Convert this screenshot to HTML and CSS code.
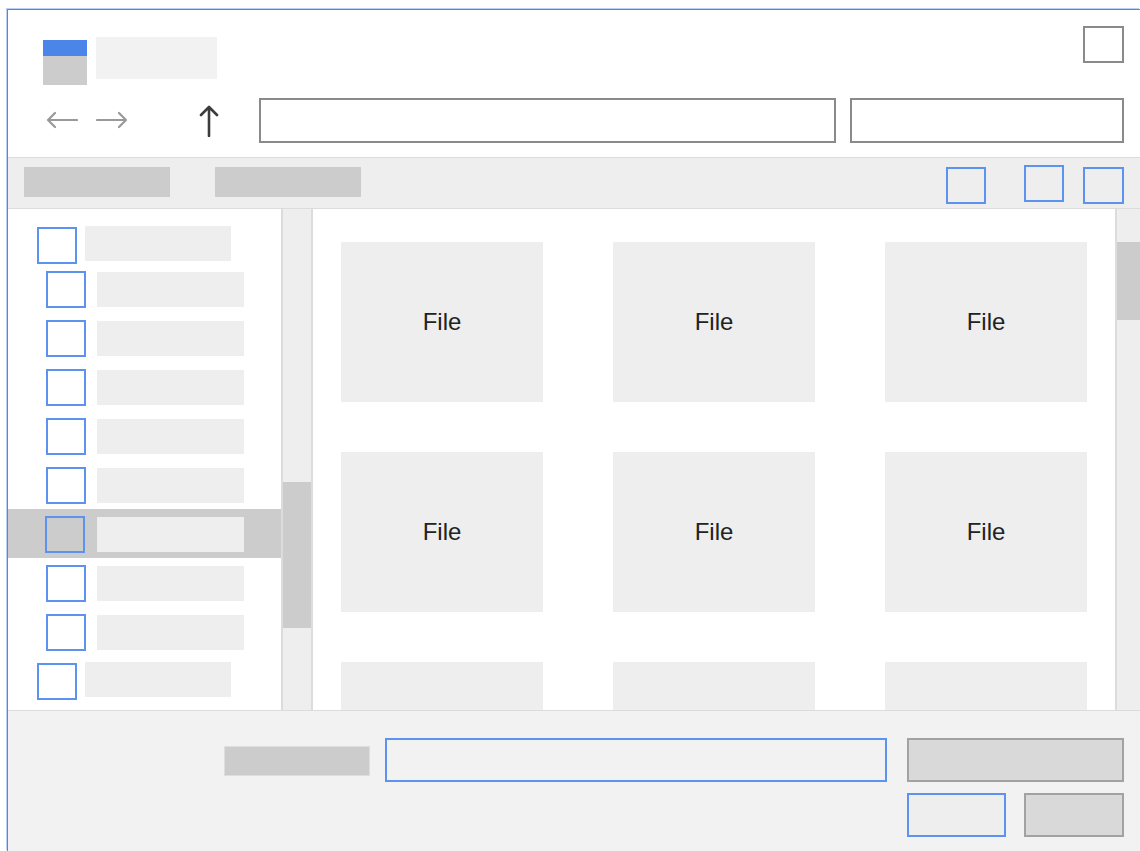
FILE: index.html
```html
<!DOCTYPE html>
<html lang="en">
<head>
<meta charset="utf-8">
<title>Open file</title>
<link rel="stylesheet" href="styles.css">
</head>
<body>
<div class="window">
  <header class="header">
    <div class="titlebar">
      <div class="app-icon"><span class="app-icon__bar"></span><span class="app-icon__body"></span></div>
      <div class="title-placeholder"></div>
      <div class="close-box"></div>
    </div>
    <div class="navbar">
      <svg class="nav-arrow" width="32" height="18" viewBox="0 0 32 18" fill="none" stroke="currentColor" stroke-width="2.2" stroke-linecap="round" stroke-linejoin="round"><path d="M31 9H2M9 2L2 9l7 7"/></svg>
      <svg class="nav-arrow nav-arrow--fwd" width="32" height="18" viewBox="0 0 32 18" fill="none" stroke="currentColor" stroke-width="2.2" stroke-linecap="round" stroke-linejoin="round"><path d="M1 9h29M23 2l7 7-7 7"/></svg>
      <svg class="nav-up" width="20" height="32" viewBox="0 0 20 32" fill="none" stroke="currentColor" stroke-width="2.6" stroke-linecap="round" stroke-linejoin="round"><path d="M10 31V2M2 10l8-8 8 8"/></svg>
      <div class="address-box"></div>
      <div class="search-box"></div>
    </div>
  </header>

  <div class="toolbar">
    <div class="tool-btn"></div>
    <div class="tool-btn"></div>
    <div class="toolbar__views">
      <div class="view-btn"></div>
      <div class="view-btn view-btn--raised"></div>
      <div class="view-btn view-btn--last"></div>
    </div>
  </div>

  <div class="main">
    <nav class="tree">
      <div class="tree-row tree-row--root"><span class="check"></span><span class="tree-label"></span></div>
      <div class="tree-row"><span class="check"></span><span class="tree-label"></span></div>
      <div class="tree-row"><span class="check"></span><span class="tree-label"></span></div>
      <div class="tree-row"><span class="check"></span><span class="tree-label"></span></div>
      <div class="tree-row"><span class="check"></span><span class="tree-label"></span></div>
      <div class="tree-row"><span class="check"></span><span class="tree-label"></span></div>
      <div class="tree-row tree-row--selected"><span class="check"></span><span class="tree-label"></span></div>
      <div class="tree-row"><span class="check"></span><span class="tree-label"></span></div>
      <div class="tree-row"><span class="check"></span><span class="tree-label"></span></div>
      <div class="tree-row tree-row--root"><span class="check"></span><span class="tree-label"></span></div>
    </nav>
    <div class="tree-scroll"><div class="tree-scroll__thumb"></div></div>

    <section class="files">
      <div class="file-grid">
        <div class="file-card">File</div>
        <div class="file-card">File</div>
        <div class="file-card">File</div>
        <div class="file-card">File</div>
        <div class="file-card">File</div>
        <div class="file-card">File</div>
        <div class="file-card"></div>
        <div class="file-card"></div>
        <div class="file-card"></div>
      </div>
    </section>
    <div class="files-scroll"><div class="files-scroll__thumb"></div></div>
  </div>

  <footer class="footer">
    <div class="name-label"></div>
    <div class="name-input"></div>
    <div class="actions">
      <div class="btn btn--type"></div>
      <div class="actions__row">
        <div class="btn btn--ok"></div>
        <div class="btn btn--cancel"></div>
      </div>
    </div>
  </footer>
</div>
</body>
</html>
```

FILE: styles.css
```css
* {
  box-sizing: border-box;
}

html,
body {
  margin: 0;
  height: 100%;
  overflow: hidden;
  background: #fff;
  font-family: "Liberation Sans", Arial, sans-serif;
}

.window {
  margin: 9px 0 0 7px;
  height: calc(100% - 9px);
  display: flex;
  flex-direction: column;
  border-top: 1px solid #4f88ec;
  border-left: 1px solid #4f88ec;
  box-shadow: -1px -1px 0 #b9d0f8;
  background: #fff;
}

/* ---------- header ---------- */
.header {
  height: 147px;
  display: flex;
  flex-direction: column;
}

.titlebar {
  height: 78px;
  display: flex;
  align-items: flex-start;
  padding: 16px 16px 0 35px;
}

.app-icon {
  width: 44px;
  margin-top: 14px;
  display: flex;
  flex-direction: column;
}

.app-icon__bar {
  height: 16px;
  background: #4a86e8;
}

.app-icon__body {
  height: 29px;
  background: #cccccc;
}

.title-placeholder {
  width: 121px;
  height: 42px;
  margin: 11px 0 0 9px;
  background: #f2f2f2;
}

.close-box {
  width: 41px;
  height: 37px;
  margin-left: auto;
  border: 2px solid #8a8a8a;
}

.navbar {
  flex: 1;
  display: flex;
  align-items: flex-start;
  padding: 10px 16px 0 38px;
}

.nav-arrow {
  color: #999999;
  margin-top: 13px;
}

.nav-arrow--fwd {
  margin-left: 18px;
}

.nav-up {
  color: #3c3c3c;
  margin: 7px 0 0 71px;
}

.address-box {
  width: 577px;
  height: 45px;
  margin-left: 40px;
  border: 2px solid #8a8a8a;
}

.search-box {
  width: 274px;
  height: 45px;
  margin-left: auto;
  border: 2px solid #8a8a8a;
}

/* ---------- toolbar ---------- */
.toolbar {
  height: 52px;
  display: flex;
  align-items: flex-start;
  padding: 9px 16px 0 16px;
  background: #eeeeee;
  border-top: 1px solid #dcdcdc;
  border-bottom: 1px solid #dcdcdc;
}

.tool-btn {
  width: 146px;
  height: 30px;
  background: #cccccc;
}

.tool-btn + .tool-btn {
  margin-left: 45px;
}

.toolbar__views {
  margin-left: auto;
  display: flex;
  align-items: flex-start;
}

.view-btn {
  width: 40px;
  height: 37px;
  border: 2px solid #5e92f0;
}

.view-btn--raised {
  margin: -2px 0 0 38px;
}

.view-btn--last {
  width: 41px;
  margin-left: 19px;
}

/* ---------- main area ---------- */
.main {
  height: 501px;
  display: flex;
}

.tree {
  width: 273px;
  flex: none;
  padding-top: 11px;
  display: flex;
  flex-direction: column;
}

.tree-row {
  height: 49px;
  display: flex;
  align-items: flex-start;
  padding: 7px 0 0 38px;
}

.tree-row--root {
  height: 44px;
  padding-left: 29px;
}

.tree-row--selected {
  background: #cccccc;
  padding-left: 37px;
}

.check {
  width: 40px;
  height: 37px;
  flex: none;
  border: 2px solid #5e92f0;
  background: #fff;
}

.tree-row--selected .check {
  background: #cccccc;
}

.tree-label {
  width: 147px;
  height: 35px;
  margin: 1px 0 0 11px;
  background: #eeeeee;
}

.tree-row--selected .tree-label {
  margin-left: 12px;
}

.tree-row--root .tree-label {
  width: 146px;
  margin: -1px 0 0 8px;
}

.tree-scroll {
  width: 32px;
  flex: none;
  background: #eeeeee;
  border-left: 2px solid #dcdcdc;
  border-right: 2px solid #dcdcdc;
  padding-top: 273px;
}

.tree-scroll__thumb {
  height: 146px;
  background: #cccccc;
}

.files {
  flex: 1;
  overflow: hidden;
  padding: 33px 0 0 28px;
}

.file-grid {
  display: grid;
  grid-template-columns: repeat(3, 202px);
  grid-auto-rows: 160px;
  column-gap: 70px;
  row-gap: 50px;
}

.file-card {
  display: flex;
  align-items: center;
  justify-content: center;
  background: #eeeeee;
  color: #222;
  font-size: 24px;
}

.files-scroll {
  width: 25px;
  flex: none;
  background: #eeeeee;
  border-left: 2px solid #dcdcdc;
  padding-top: 33px;
}

.files-scroll__thumb {
  height: 78px;
  background: #cccccc;
}

/* ---------- footer ---------- */
.footer {
  flex: 1;
  display: flex;
  justify-content: flex-end;
  align-items: flex-start;
  padding: 27px 16px 0 0;
  background: #f2f2f2;
  border-top: 1px solid #dcdcdc;
}

.name-label {
  width: 146px;
  height: 30px;
  margin: 8px 15px 0 0;
  background: #cccccc;
  border: 1px solid #dedede;
}

.name-input {
  width: 502px;
  height: 44px;
  margin-right: 20px;
  border: 2px solid #5e92f0;
}

.actions {
  width: 217px;
  display: flex;
  flex-direction: column;
  gap: 11px;
}

.actions__row {
  display: flex;
  justify-content: space-between;
}

.btn {
  height: 44px;
}

.btn--type {
  background: #d9d9d9;
  border: 2px solid #a2a2a2;
}

.btn--ok {
  width: 99px;
  background: #eeeeee;
  border: 2px solid #5e92f0;
}

.btn--cancel {
  width: 100px;
  background: #d9d9d9;
  border: 2px solid #a2a2a2;
}
```
